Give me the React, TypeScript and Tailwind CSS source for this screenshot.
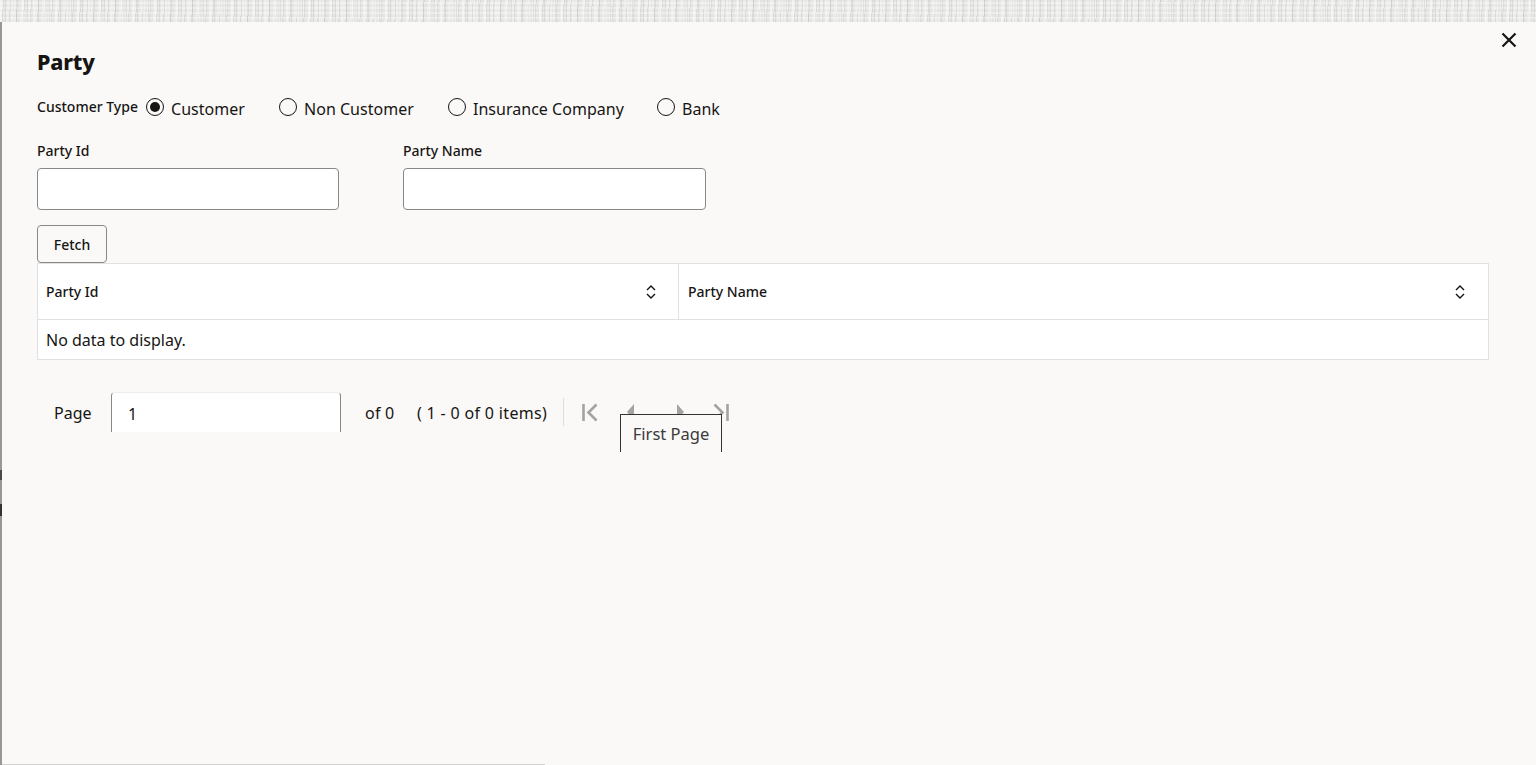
import React from 'react';

const font = "font-['Noto_Sans','Open_Sans',sans-serif]";

function Radio({ label, checked, className }: { label: string; checked?: boolean; className: string }) {
  return (
    <div className={`flex items-center ${className}`}>
      <span className="flex h-[18px] w-[18px] shrink-0 items-center justify-center rounded-full border-[1.5px] border-[#161513]">
        {checked && <span className="h-[10px] w-[10px] rounded-full bg-[#161513]" />}
      </span>
      <span className="ml-[7px] mt-[3px] text-[16px] leading-[22px] tracking-[0.02px] text-[#161513]">{label}</span>
    </div>
  );
}

function SortIcon() {
  return (
    <svg width="12" height="14" viewBox="0 0 12 14" fill="none" stroke="#161513" strokeWidth="1.4">
      <path d="M2 5l4-4 4 4" />
      <path d="M2 9l4 4 4-4" />
    </svg>
  );
}

function PagerIcon({ d, className }: { d: string; className?: string }) {
  return (
    <svg width="20" height="20" viewBox="0 0 20 20" fill="none" stroke="#a5a3a1" strokeWidth="2.6" className={`shrink-0 ${className ?? ''}`}>
      <path d={d} />
    </svg>
  );
}

export default function App() {
  return (
    <div className={`flex h-[765px] w-[1536px] flex-col overflow-hidden bg-[#fbf9f8] ${font}`}>
      {/* page behind the dialog */}
      <div className="h-[22px] shrink-0 bg-[#ebebea] bg-[repeating-linear-gradient(90deg,#ffffff55_0px,#ffffff55_2px,#00000000_2px,#00000000_5px,#0000000f_5px,#0000000f_6px,#00000000_6px,#00000000_11px),repeating-linear-gradient(93deg,#ffffff44_0px,#ffffff44_3px,#0000000d_3px,#0000000d_4px,#00000000_4px,#00000000_7px),repeating-linear-gradient(0deg,#00000008_0px,#00000008_3px,#ffffff22_3px,#ffffff22_5px)]" />
      <div className="flex min-h-0 flex-1">
        <div className="flex w-[2px] shrink-0 flex-col bg-[#989796]">
          <div className="mt-[448px] h-[10px] bg-[#4a4a4a]" />
          <div className="mt-[24px] h-[12px] bg-[#333333]" />
        </div>

        <div className="relative flex min-w-0 flex-1 flex-col pl-[35px]">
          <button className="absolute right-[18px] top-[9px]">
            <svg width="18" height="18" viewBox="0 0 18 18" fill="none" stroke="#161513" strokeWidth="2.2">
              <path d="M2.5 2.5l13 13M15.5 2.5l-13 13" />
            </svg>
          </button>

          <h1 className="mt-[25px] text-[21.5px] font-extrabold leading-[30px] tracking-[-0.2px] text-[#161513]">Party</h1>

          <div className="mt-[18px] flex h-[24px] items-center">
            <span className="w-[109px] text-[14px] font-medium leading-[20px] text-[#161513]">Customer Type</span>
            <Radio label="Customer" checked className="w-[133px]" />
            <Radio label="Non Customer" className="w-[169px]" />
            <Radio label="Insurance Company" className="w-[209px]" />
            <Radio label="Bank" className="w-[80px]" />
          </div>

          <div className="mt-[22px] flex">
            <div className="w-[366px]">
              <label className="block text-[14px] font-medium leading-[20px] text-[#161513]">Party Id</label>
              <div className="mt-[7px] h-[42px] w-[302px] rounded-[4px] border border-[#8a8886] bg-white" />
            </div>
            <div>
              <label className="block text-[14px] font-medium leading-[20px] text-[#161513]">Party Name</label>
              <div className="mt-[7px] h-[42px] w-[303px] rounded-[4px] border border-[#8a8886] bg-white" />
            </div>
          </div>

          <button className="mt-[15px] h-[38px] w-[70px] rounded-[4px] border border-[#8a8886] text-[14px] font-medium text-[#161513]">
            Fetch
          </button>

          <div className="w-[1452px] border border-[#e3e1df] bg-white">
            <div className="flex h-[56px] border-b border-[#e3e1df] text-[14px] font-medium text-[#161513]">
              <div className="flex w-[641px] items-center justify-between border-r border-[#e3e1df] pl-[8px] pr-[21px]">
                <span>Party Id</span>
                <SortIcon />
              </div>
              <div className="flex flex-1 items-center justify-between pl-[9px] pr-[22px]">
                <span>Party Name</span>
                <SortIcon />
              </div>
            </div>
            <div className="flex h-[39px] items-center pl-[8px] text-[16px] text-[#161513]">No data to display.</div>
          </div>

          <div className="ml-[17px] mt-[32px] flex h-[40px] items-center text-[16px] text-[#161513]">
            <span className="mt-[2px] w-[57px]">Page</span>
            <div className="flex h-[40px] w-[230px] items-center rounded-t-[4px] border-x border-t border-x-[#8a8886] border-t-[#eeecea] bg-white pl-[16px] pt-[2px]">1</div>
            <span className="ml-[24px] mt-[2px] w-[30px] whitespace-nowrap tracking-[0.2px]">of 0</span>
            <span className="ml-[22px] mt-[2px] w-[130px] whitespace-nowrap tracking-[0.33px]">( 1 - 0 of 0 items)</span>
            <div className="ml-[16px] h-[28px] w-px bg-[#dfdddb]" />
            <div className="ml-[16px] flex items-center">
              <PagerIcon d="M3.5 2v17M16.5 2.5L8.5 10.5l8 8" />
              <svg width="20" height="20" viewBox="0 0 20 20" fill="#a5a3a1" className="ml-[20px] shrink-0"><path d="M14 2v16l-7-8z" /></svg>
              <svg width="20" height="20" viewBox="0 0 20 20" fill="#a5a3a1" className="ml-[30px] shrink-0"><path d="M7 2v16l7-8z" /></svg>
              <PagerIcon d="M17.5 2v17M4.5 2.5l8 8-8 8" className="ml-[20px]" />
            </div>
          </div>

          {/* tooltip over the pager, cut off at the bottom */}
          <div className="absolute left-[618px] top-[392px] flex h-[38px] w-[102px] items-center justify-center border-x border-t border-[#333333] bg-[#fbf9f8] pt-[2px] text-[16.5px] text-[#3a3a3a]">
            First Page
          </div>

          <div className="mt-auto h-[1px] w-[543px] -translate-x-[35px] bg-[#d4d2d0]" />
        </div>
      </div>
    </div>
  );
}
